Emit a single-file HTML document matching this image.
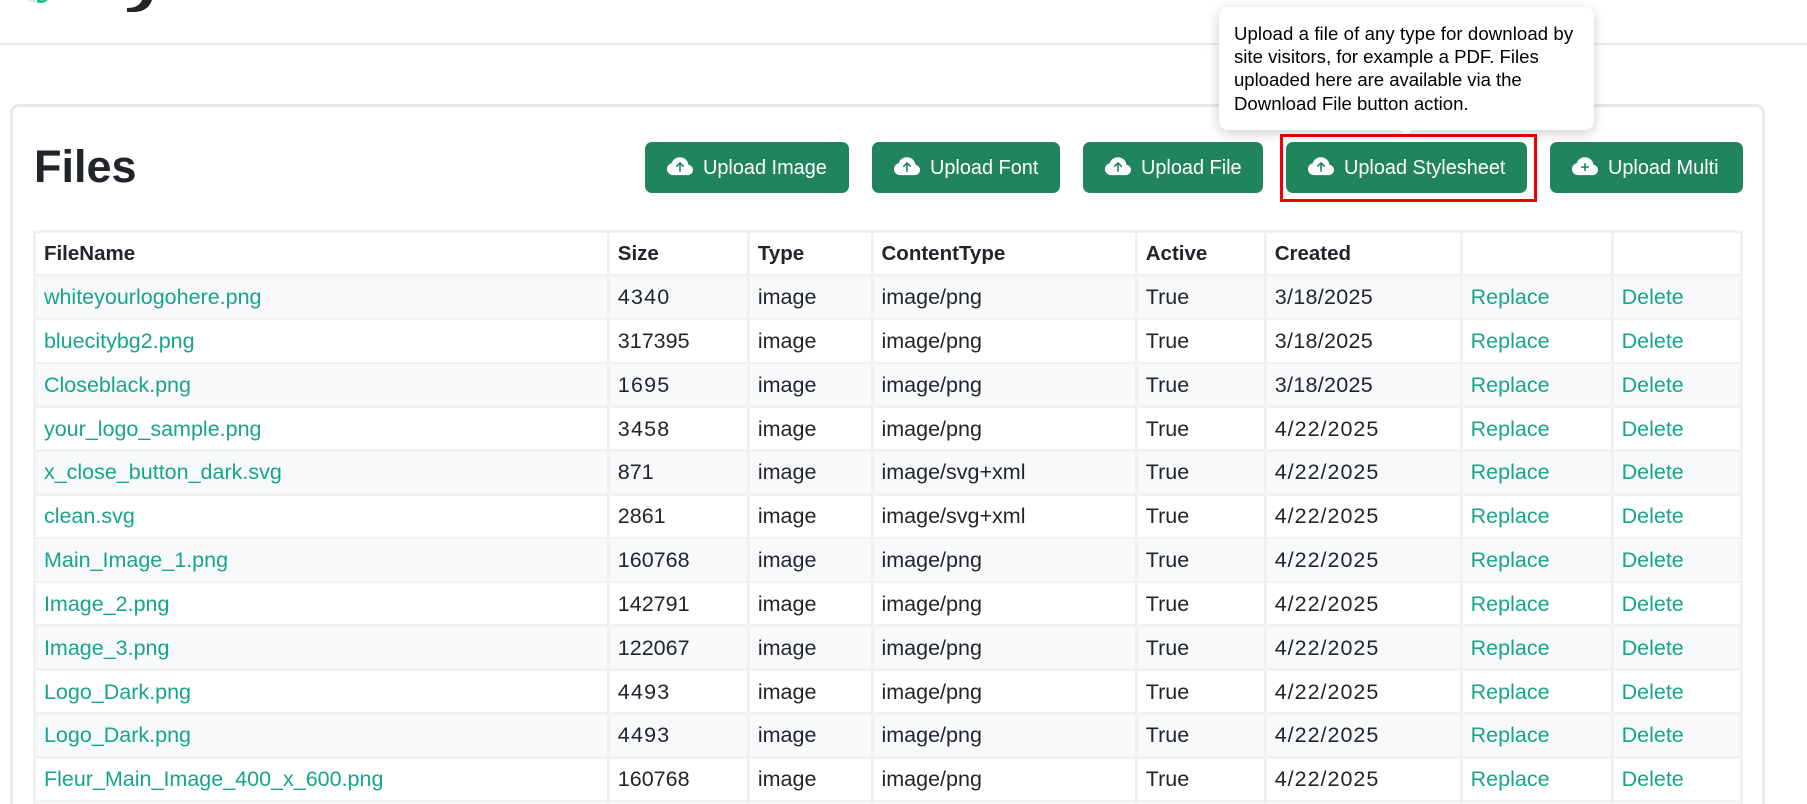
<!DOCTYPE html>
<html><head><meta charset="utf-8"><title>Files</title>
<style>
html,body{margin:0;padding:0;width:1807px;height:804px;overflow:hidden;background:#fff;font-family:"Liberation Sans",sans-serif;color:#212529}
#page{position:absolute;left:0;top:0;width:1807px;height:804px;overflow:hidden;background:#fff}
.abs{position:absolute}
#hline{left:0;top:43px;width:1807px;height:2px;background:#e9ebeb;box-shadow:0 2px 3px rgba(0,0,0,.02)}
#panel{left:10px;top:104px;width:1749px;height:697px;border:3px solid #e6e9e9;border-bottom:0;border-radius:9px 9px 0 0;box-sizing:content-box}
#title{left:34px;top:142px;font-size:45px;line-height:50px;font-weight:700;color:#212529}
.btn{position:absolute;top:142px;height:51px;background:#20855f;border-radius:7px}
.btn span{position:absolute;top:0;height:51px;line-height:52px;font-size:19.9px;color:#fff;white-space:nowrap}
.btn svg{position:absolute;top:11.75px;width:26px;height:26px;fill:#fff}
#red{left:1280px;top:134px;width:251px;height:62px;border:3px solid #f00000}
#tip{left:1219px;top:7px;width:375px;height:123px;background:#fff;border-radius:9px;box-shadow:0 3px 12px rgba(0,0,0,.2)}
#tip div{position:absolute;left:15px;white-space:nowrap;font-size:18.6px;line-height:23px;color:#000}
#arrow{left:1399px;top:130px;width:0;height:0;border-left:7px solid transparent;border-right:7px solid transparent;border-top:4px solid #fff}
#tbl{left:33.3px;top:230px;display:grid;background:#eff1f2;padding:2.67px 2.67px 0;gap:2.67px;
grid-template-columns:571.2px 137.4px 121px 261.6px 126.3px 193.3px 148.3px 126.3px;
grid-template-rows:41.3px repeat(12,41.16px) 1.4px;font-size:21.5px}
#tbl div{background:#fff;padding-left:8px;padding-top:1px;box-sizing:border-box;display:flex;align-items:center;white-space:nowrap;overflow:hidden}
#tbl .h{font-weight:700;font-size:20.5px;padding-top:2px}
#tbl .t{background:#f8f9fa}
#tbl .l{color:#17a589}
#tbl .n{letter-spacing:1.2px}
#tbl .d{letter-spacing:1px}
#tbl .e{letter-spacing:.3px}
#tbl .x{padding:0}
</style></head><body>
<div id="page">
<svg class="abs" style="left:0;top:0" width="170" height="14" viewBox="0 0 170 14">
<path d="M37 2.5Q43 4.5 48 0H37Z" fill="#24c48e"/><path d="M27 0Q30 2 35 2.5L35 0Z" fill="#cdeee2"/>
<path d="M127 12V8Q139 8 142 0H152Q148 12 133 12Z" fill="#212529"/>
</svg>
<div class="abs" id="hline"></div>
<div class="abs" id="panel"></div>
<div class="abs" id="title">Files</div>

<div class="btn" style="left:645px;width:204px"><svg viewBox="0 0 16 16" style="left:22px"><path fill-rule="evenodd" d="M8 2a5.53 5.53 0 0 0-3.594 1.342c-.766.66-1.321 1.52-1.464 2.383C1.266 6.095 0 7.555 0 9.318 0 11.366 1.708 13 3.781 13h8.906C14.502 13 16 11.57 16 9.773c0-1.636-1.242-2.969-2.834-3.194C12.923 3.999 10.69 2 8 2zm2.354 5.146a.5.5 0 0 1-.708.708L8.5 6.707V10.5a.5.5 0 0 1-1 0V6.707L6.354 7.854a.5.5 0 1 1-.708-.708l2-2a.5.5 0 0 1 .708 0l2 2z"/></svg><span style="left:58px">Upload Image</span></div>
<div class="btn" style="left:872px;width:188px"><svg viewBox="0 0 16 16" style="left:22px"><path fill-rule="evenodd" d="M8 2a5.53 5.53 0 0 0-3.594 1.342c-.766.66-1.321 1.52-1.464 2.383C1.266 6.095 0 7.555 0 9.318 0 11.366 1.708 13 3.781 13h8.906C14.502 13 16 11.57 16 9.773c0-1.636-1.242-2.969-2.834-3.194C12.923 3.999 10.69 2 8 2zm2.354 5.146a.5.5 0 0 1-.708.708L8.5 6.707V10.5a.5.5 0 0 1-1 0V6.707L6.354 7.854a.5.5 0 1 1-.708-.708l2-2a.5.5 0 0 1 .708 0l2 2z"/></svg><span style="left:58px">Upload Font</span></div>
<div class="btn" style="left:1083px;width:180px"><svg viewBox="0 0 16 16" style="left:22px"><path fill-rule="evenodd" d="M8 2a5.53 5.53 0 0 0-3.594 1.342c-.766.66-1.321 1.52-1.464 2.383C1.266 6.095 0 7.555 0 9.318 0 11.366 1.708 13 3.781 13h8.906C14.502 13 16 11.57 16 9.773c0-1.636-1.242-2.969-2.834-3.194C12.923 3.999 10.69 2 8 2zm2.354 5.146a.5.5 0 0 1-.708.708L8.5 6.707V10.5a.5.5 0 0 1-1 0V6.707L6.354 7.854a.5.5 0 1 1-.708-.708l2-2a.5.5 0 0 1 .708 0l2 2z"/></svg><span style="left:58px">Upload File</span></div>
<div class="btn" style="left:1286px;width:241px"><svg viewBox="0 0 16 16" style="left:22px"><path fill-rule="evenodd" d="M8 2a5.53 5.53 0 0 0-3.594 1.342c-.766.66-1.321 1.52-1.464 2.383C1.266 6.095 0 7.555 0 9.318 0 11.366 1.708 13 3.781 13h8.906C14.502 13 16 11.57 16 9.773c0-1.636-1.242-2.969-2.834-3.194C12.923 3.999 10.69 2 8 2zm2.354 5.146a.5.5 0 0 1-.708.708L8.5 6.707V10.5a.5.5 0 0 1-1 0V6.707L6.354 7.854a.5.5 0 1 1-.708-.708l2-2a.5.5 0 0 1 .708 0l2 2z"/></svg><span style="left:58px">Upload Stylesheet</span></div>
<div class="btn" style="left:1550px;width:193px"><svg viewBox="0 0 16 16" style="left:22px"><path fill-rule="evenodd" d="M8 2a5.53 5.53 0 0 0-3.594 1.342c-.766.66-1.321 1.52-1.464 2.383C1.266 6.095 0 7.555 0 9.318 0 11.366 1.708 13 3.781 13h8.906C14.502 13 16 11.57 16 9.773c0-1.636-1.242-2.969-2.834-3.194C12.923 3.999 10.69 2 8 2zm.5 4v1.5H10a.5.5 0 0 1 0 1H8.5V10a.5.5 0 0 1-1 0V8.5H6a.5.5 0 0 1 0-1h1.5V6a.5.5 0 0 1 1 0z"/></svg><span style="left:58px">Upload Multi</span></div>

<div class="abs" id="red"></div>
<div class="abs" id="tip">
<div style="top:14.5px;letter-spacing:.08px">Upload a file of any type for download by</div>
<div style="top:38px">site visitors, for example a PDF. Files</div>
<div style="top:61px;letter-spacing:-.05px">uploaded here are available via the</div>
<div style="top:84.5px">Download File button action.</div>
</div>
<div class="abs" id="arrow"></div>

<div class="abs" id="tbl">
<div class="h">FileName</div><div class="h">Size</div><div class="h">Type</div><div class="h">ContentType</div><div class="h">Active</div><div class="h">Created</div><div></div><div></div>

<div class="t l">whiteyourlogohere.png</div><div class="t n">4340</div><div class="t">image</div><div class="t">image/png</div><div class="t">True</div><div class="t e">3/18/2025</div><div class="t l">Replace</div><div class="t l">Delete</div>
<div class="l">bluecitybg2.png</div><div>317395</div><div>image</div><div>image/png</div><div>True</div><div class="e">3/18/2025</div><div class="l">Replace</div><div class="l">Delete</div>
<div class="t l">Closeblack.png</div><div class="t n">1695</div><div class="t">image</div><div class="t">image/png</div><div class="t">True</div><div class="t e">3/18/2025</div><div class="t l">Replace</div><div class="t l">Delete</div>
<div class="l">your_logo_sample.png</div><div class="n">3458</div><div>image</div><div>image/png</div><div>True</div><div class="d">4/22/2025</div><div class="l">Replace</div><div class="l">Delete</div>
<div class="t l">x_close_button_dark.svg</div><div class="t">871</div><div class="t">image</div><div class="t">image/svg+xml</div><div class="t">True</div><div class="t d">4/22/2025</div><div class="t l">Replace</div><div class="t l">Delete</div>
<div class="l">clean.svg</div><div>2861</div><div>image</div><div>image/svg+xml</div><div>True</div><div class="d">4/22/2025</div><div class="l">Replace</div><div class="l">Delete</div>
<div class="t l">Main_Image_1.png</div><div class="t">160768</div><div class="t">image</div><div class="t">image/png</div><div class="t">True</div><div class="t d">4/22/2025</div><div class="t l">Replace</div><div class="t l">Delete</div>
<div class="l">Image_2.png</div><div>142791</div><div>image</div><div>image/png</div><div>True</div><div class="d">4/22/2025</div><div class="l">Replace</div><div class="l">Delete</div>
<div class="t l">Image_3.png</div><div class="t">122067</div><div class="t">image</div><div class="t">image/png</div><div class="t">True</div><div class="t d">4/22/2025</div><div class="t l">Replace</div><div class="t l">Delete</div>
<div class="l">Logo_Dark.png</div><div class="n">4493</div><div>image</div><div>image/png</div><div>True</div><div class="d">4/22/2025</div><div class="l">Replace</div><div class="l">Delete</div>
<div class="t l">Logo_Dark.png</div><div class="t n">4493</div><div class="t">image</div><div class="t">image/png</div><div class="t">True</div><div class="t d">4/22/2025</div><div class="t l">Replace</div><div class="t l">Delete</div>
<div class="l">Fleur_Main_Image_400_x_600.png</div><div>160768</div><div>image</div><div>image/png</div><div>True</div><div class="d">4/22/2025</div><div class="l">Replace</div><div class="l">Delete</div>
<div class="t x"></div><div class="t x"></div><div class="t x"></div><div class="t x"></div><div class="t x"></div><div class="t x"></div><div class="t x"></div><div class="t x"></div>
</div>
</div>
</body></html>
